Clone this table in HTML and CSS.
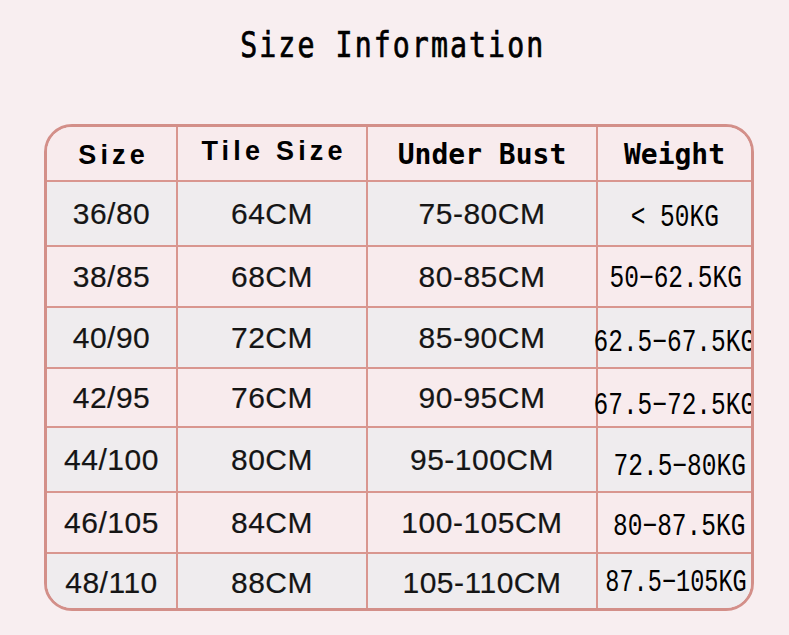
FILE: index.html
```html
<!DOCTYPE html>
<html lang="en">
<head>
<meta charset="utf-8">
<title>Size Information</title>
<link rel="stylesheet" href="styles.css">
</head>
<body>
<div class="page">
  <h1 class="title"><span class="title-text">Size Information</span></h1>
  <div class="chart">
    <div class="cell head"><span class="h-sans">Size</span></div>
    <div class="cell head"><span class="h-sans h-up">Tile Size</span></div>
    <div class="cell head"><span class="h-mono">Under Bust</span></div>
    <div class="cell head last-col"><span class="h-mono">Weight</span></div>

    <div class="cell gray">36/80</div>
    <div class="cell gray">64CM</div>
    <div class="cell gray">75-80CM</div>
    <div class="cell gray last-col"><span class="mono dy-a">&lt; 50KG</span></div>

    <div class="cell pink">38/85</div>
    <div class="cell pink">68CM</div>
    <div class="cell pink">80-85CM</div>
    <div class="cell pink last-col"><span class="mono dy-b">50−62.5KG</span></div>

    <div class="cell gray">40/90</div>
    <div class="cell gray">72CM</div>
    <div class="cell gray">85-90CM</div>
    <div class="cell gray last-col"><span class="mono dy-c">62.5−67.5KG</span></div>

    <div class="cell pink">42/95</div>
    <div class="cell pink">76CM</div>
    <div class="cell pink">90-95CM</div>
    <div class="cell pink last-col"><span class="mono dy-d">67.5−72.5KG</span></div>

    <div class="cell gray">44/100</div>
    <div class="cell gray">80CM</div>
    <div class="cell gray">95-100CM</div>
    <div class="cell gray last-col"><span class="mono dy-e">72.5−80KG</span></div>

    <div class="cell pink">46/105</div>
    <div class="cell pink">84CM</div>
    <div class="cell pink">100-105CM</div>
    <div class="cell pink last-col"><span class="mono dy-f">80−87.5KG</span></div>

    <div class="cell gray last-row"><span class="low">48/110</span></div>
    <div class="cell gray last-row"><span class="low">88CM</span></div>
    <div class="cell gray last-row"><span class="low">105-110CM</span></div>
    <div class="cell gray last-row last-col"><span class="mono dy-g">87.5−105KG</span></div>
  </div>
</div>
</body>
</html>
```

FILE: styles.css
```css
html, body {
  margin: 0;
  padding: 0;
  background: #f8eef0;
}

.page {
  width: 789px;
  height: 635px;
  display: flex;
  flex-direction: column;
}

.title {
  margin: 0;
  padding-top: 25px;
  height: 40px;
  line-height: 40px;
  text-align: center;
  font-family: "DejaVu Sans Mono", monospace;
  font-weight: normal;
  font-size: 34px;
  color: #000;
  margin-bottom: 59px;
  margin-left: -4px;
}

.title-text {
  display: inline-block;
  letter-spacing: 2.5px;
  transform: scaleX(0.83) scaleY(1.04);
  -webkit-text-stroke: 0.7px #000;
}

.chart {
  margin-left: 44px;
  width: 704px;
  border: 3px solid #d38f89;
  border-radius: 28px;
  overflow: hidden;
  display: grid;
  grid-template-columns: 131px 190px 230px 153px;
  grid-template-rows: 55px 65px 61px 61px 59px 65px 61px 54px;
}

.cell {
  border-right: 2px solid #d9968f;
  border-bottom: 2px solid #d9968f;
  display: flex;
  align-items: center;
  justify-content: center;
  font-family: "Liberation Sans", Arial, sans-serif;
  font-size: 30px;
  letter-spacing: 0.5px;
  color: #151515;
  -webkit-text-stroke: 0.2px #151515;
  white-space: nowrap;
  overflow: visible;
}

.last-col { border-right: none; }
.last-row { border-bottom: none; }

.head { background: #f8ebed; }
.gray { background: #efecee; }
.pink { background: #f8ebed; }

.low {
  position: relative;
  top: 2px;
}

.h-sans {
  font-family: "Liberation Sans", Arial, sans-serif;
  font-weight: bold;
  font-size: 27px;
  letter-spacing: 4.2px;
  color: #000;
  -webkit-text-stroke: 0;
  margin-right: -4.2px;
  position: relative;
  top: 2px;
}

.h-up { top: -2px; }

.h-mono {
  font-family: "DejaVu Sans Mono", monospace;
  font-weight: bold;
  font-size: 28px;
  letter-spacing: 0;
  color: #000;
  -webkit-text-stroke: 0;
  position: relative;
  top: 1px;
}

.mono {
  display: inline-block;
  font-family: "Liberation Mono", monospace;
  font-size: 31px;
  letter-spacing: 0;
  color: #000;
  -webkit-text-stroke: 0;
  transform: translateY(2px) scaleX(0.79);
}

.dy-a { transform: translate(0, 4px) scaleX(0.79); }
.dy-b { transform: translate(1px, 1.5px) scaleX(0.79); }
.dy-c { transform: translate(0, 5px) scaleX(0.79); }
.dy-d { transform: translate(0, 7.5px) scaleX(0.79); }
.dy-e { transform: translate(5px, 7px) scaleX(0.79); }
.dy-f { transform: translate(4.5px, 4px) scaleX(0.79); }
.dy-g { transform: translate(2px, 1px) scaleX(0.76); }
```
